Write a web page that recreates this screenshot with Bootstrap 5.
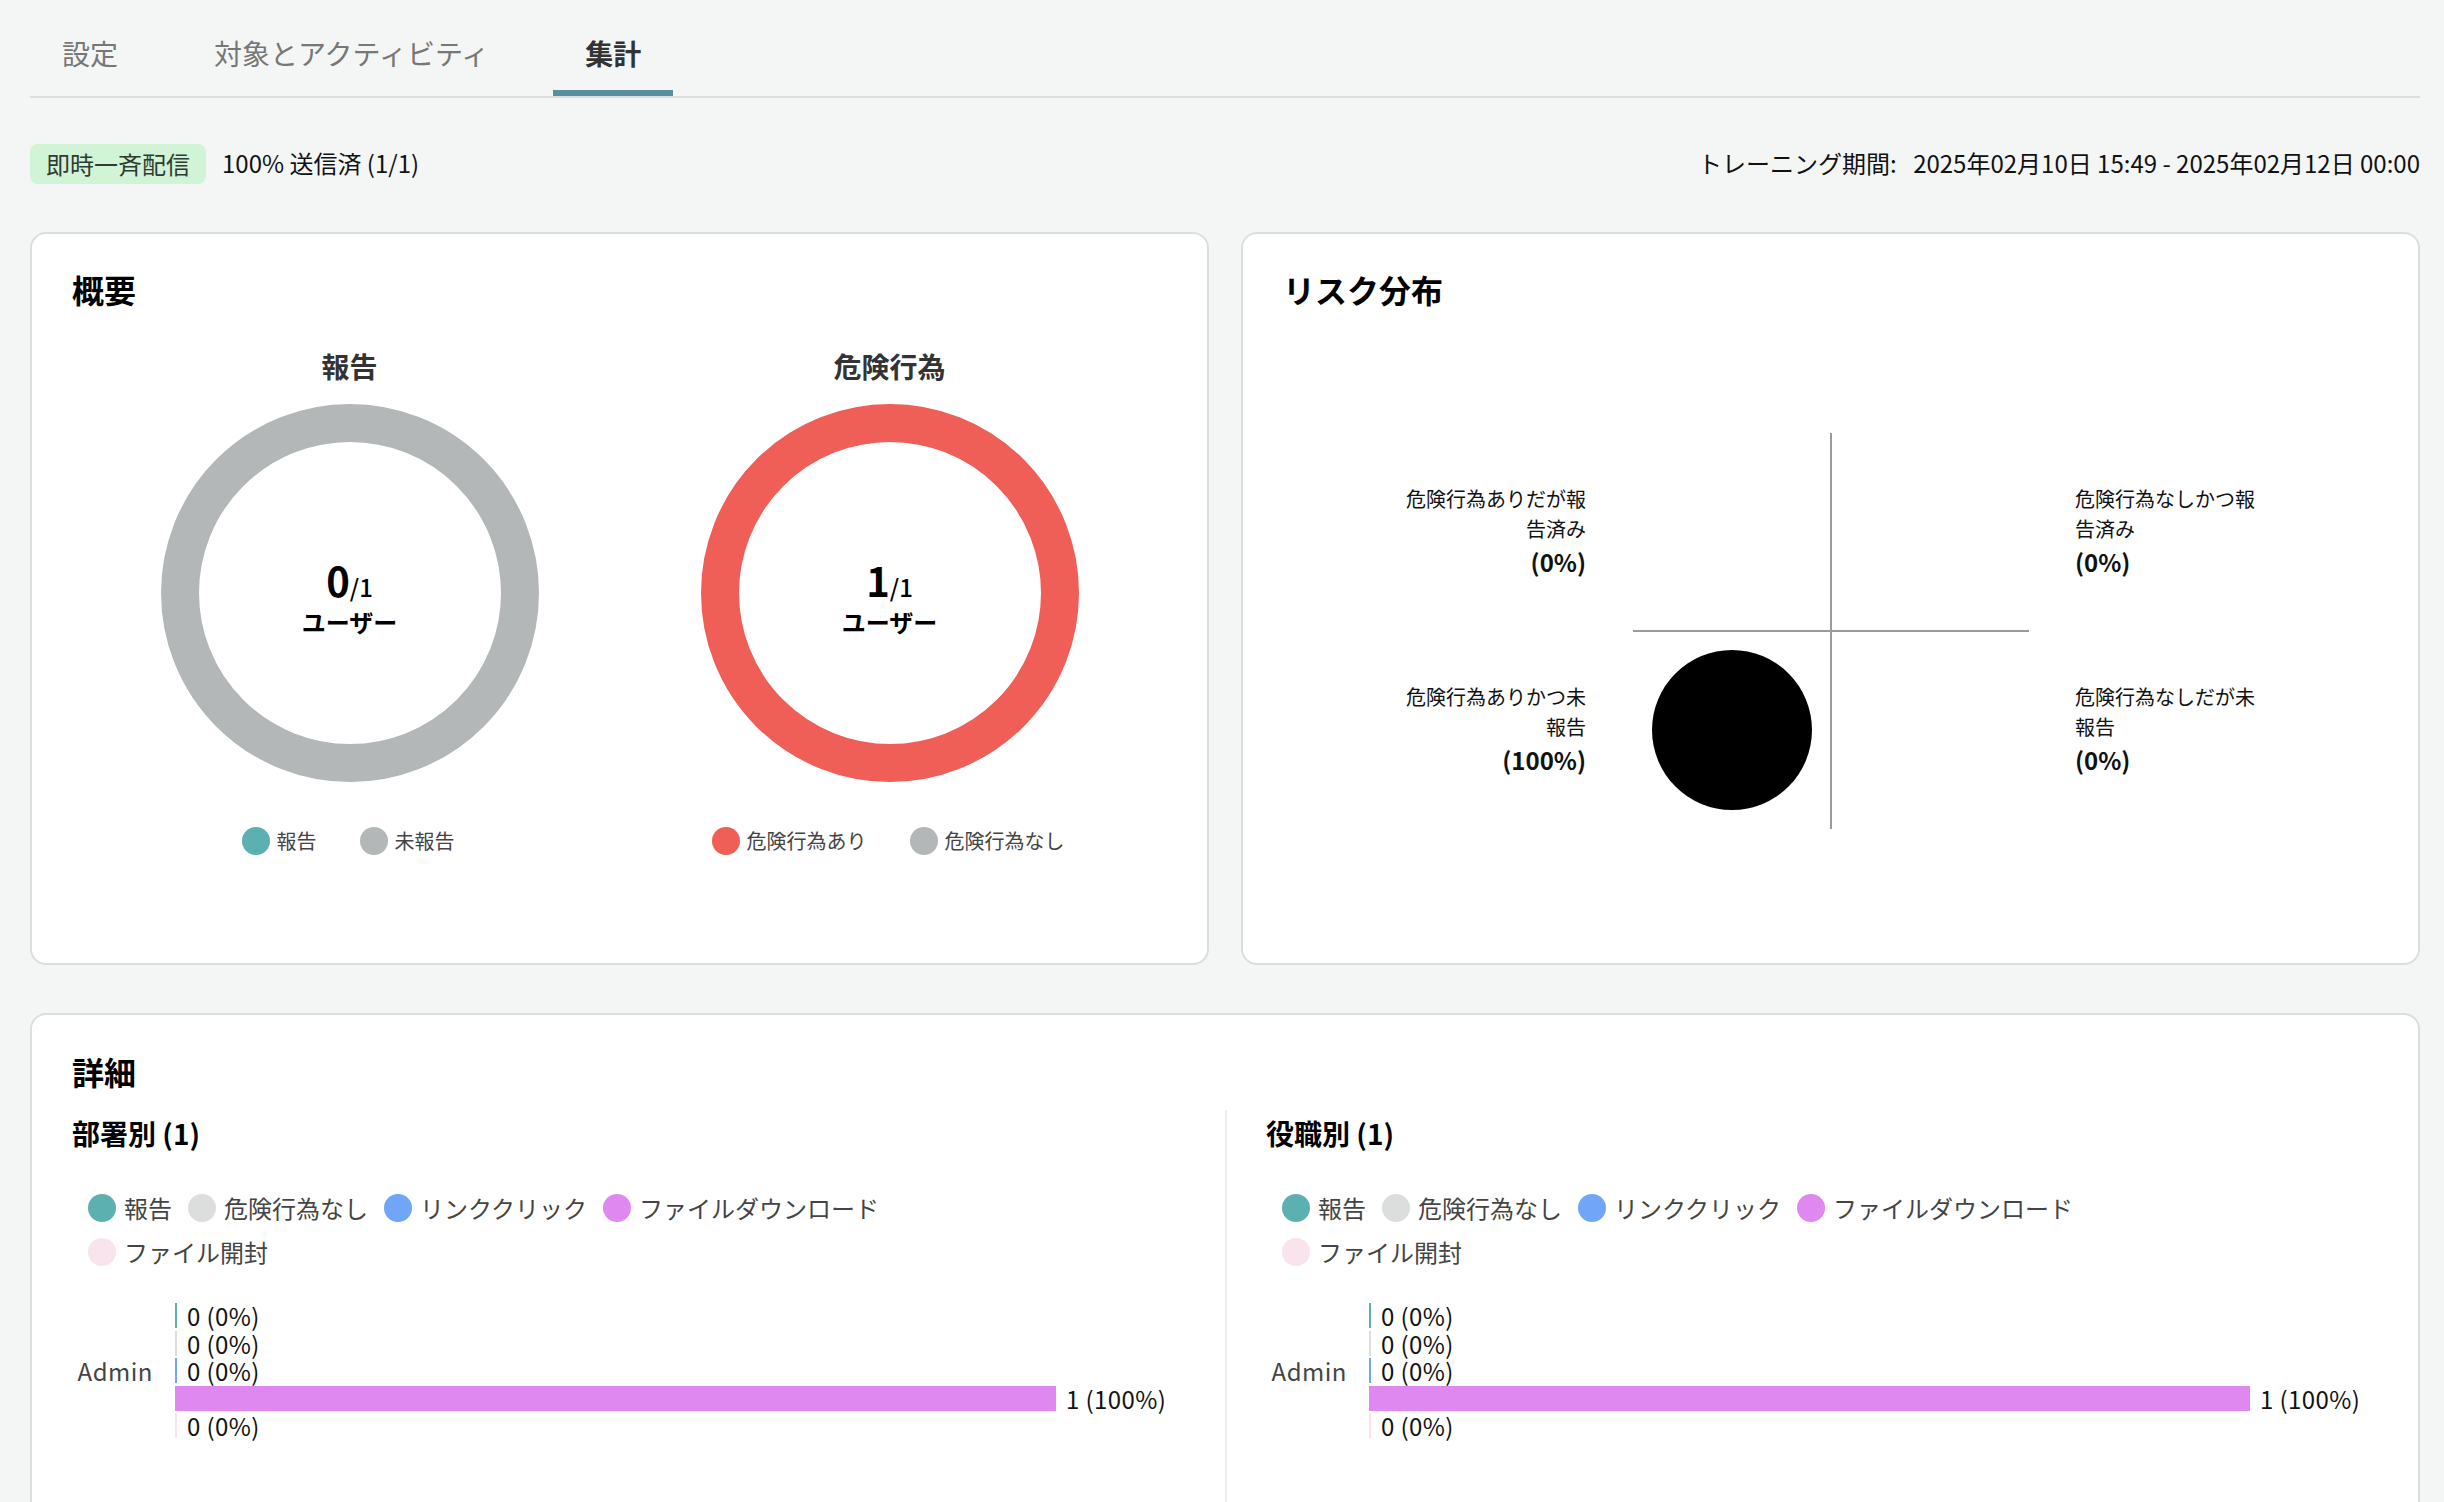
<!DOCTYPE html>
<html lang="ja">
<head>
    <meta charset="UTF-8">
    <meta name="viewport" content="width=device-width, initial-scale=1.0">
    <title>集計</title>
    <link href="https://cdn.jsdelivr.net/npm/bootstrap@5.3.0/dist/css/bootstrap.min.css" rel="stylesheet">
    <style>
        html, body {
            height: 1502px;
            overflow: hidden;
        }
        body {
            background-color: #f4f6f5;
            font-family: "Noto Sans CJK JP", "Noto Sans", sans-serif;
            font-size: 24px;
            line-height: 36px;
            color: #111;
            padding: 0 24px 0 30px;
        }
        .tabs {
            border-bottom: 2px solid #dcdedd;
            gap: 32px;
        }
        .tabs .nav-link {
            padding: 33px 32px 17px;
            font-size: 28px;
            line-height: 40px;
            color: #777;
            border-bottom: 6px solid transparent;
        }
        .tabs .nav-link.active {
            color: #333;
            font-weight: 700;
            border-bottom-color: #5b8fa0;
        }
        .meta-row {
            margin-top: 46px;
            margin-bottom: 48px;
            height: 40px;
        }
        .delivery-badge {
            background-color: #d2f4d6;
            color: #2e3b35;
            border-radius: 8px;
            padding: 2px 16px;
            margin-right: 16px;
        }
        .meta-text {
            padding-bottom: 2px;
        }
        .period-label {
            margin-right: 11px;
        }
        .panel {
            border: 2px solid #dcdedd;
            border-radius: 16px;
            background-color: #fff;
            padding: 31px 40px 0;
        }
        .panel-top {
            width: 1179px;
            height: 733px;
        }
        .panel-title {
            font-size: 32px;
            line-height: 48px;
            font-weight: 700;
            color: #000;
            margin: 0;
        }
        .donut-col {
            width: 540px;
        }
        .donut-title {
            font-size: 28px;
            line-height: 40px;
            font-weight: 700;
            color: #333;
            margin: 33px 0 18px;
        }
        .donut {
            width: 378px;
            height: 378px;
            border: 38px solid #b3b7b7;
            color: #000;
        }
        .donut-red {
            border-color: #ef5e57;
        }
        .donut-num {
            font-size: 40px;
            line-height: 41px;
            font-weight: 700;
            margin-top: 10px;
        }
        .donut-num small {
            font-size: 24px;
            font-weight: 500;
        }
        .donut-unit {
            font-weight: 700;
            line-height: 30px;
        }
        .mini-legend {
            margin-top: 45px;
            padding-right: 3px;
            gap: 43px;
            font-size: 20px;
            line-height: 28px;
            color: #444;
        }
        .dot {
            display: inline-block;
            flex-shrink: 0;
            width: 28px;
            height: 28px;
            border-radius: 50%;
            margin-right: 7px;
        }
        .dot-teal { background-color: #5cb0b0; }
        .dot-gray { background-color: #b3b7b7; }
        .dot-red { background-color: #ef5e57; }
        .dot-light { background-color: #dcdedd; }
        .dot-blue { background-color: #70a5f8; }
        .dot-purple { background-color: #df88f0; }
        .dot-pale { background-color: #f9e4ee; }
        .risk {
            margin-top: 120px;
        }
        .risk-col {
            width: 180px;
        }
        .risk-col div {
            height: 198px;
        }
        .risk-label {
            font-size: 20px;
            line-height: 30px;
        }
        .risk-value {
            font-size: 24px;
            line-height: 36px;
            font-weight: 700;
        }
        .risk-chart {
            position: relative;
            width: 396px;
            height: 396px;
            margin: 0 46px 0 47px;
        }
        .axis-v {
            position: absolute;
            left: 197px;
            top: 0;
            width: 2px;
            height: 396px;
            background-color: #9b9b9b;
        }
        .axis-h {
            position: absolute;
            left: 0;
            top: 197px;
            width: 396px;
            height: 2px;
            background-color: #9b9b9b;
        }
        .risk-point {
            position: absolute;
            left: 19px;
            top: 217px;
            width: 160px;
            height: 160px;
            background-color: #000;
        }
        .panel-detail {
            height: 700px;
            margin-top: 48px;
        }
        .panel-detail .panel-title {
            padding-top: 1px;
        }
        .detail-row {
            margin-top: 15px;
            height: 600px;
        }
        .detail-col {
            width: 1153px;
            padding-top: 3px;
        }
        .detail-col + .detail-col {
            border-left: 2px solid #eceeed;
            padding-left: 39px;
        }
        .detail-title {
            font-size: 28px;
            line-height: 40px;
            font-weight: 700;
            color: #000;
            margin: 0;
        }
        .bar-legend {
            margin: 37px 0 33px;
            padding-left: 16px;
            max-width: 900px;
            gap: 8px 16px;
            color: #444;
        }
        .bar-legend .dot {
            margin-right: 8px;
        }
        .bar-label {
            width: 81px;
            margin-right: 22px;
            color: #444;
            letter-spacing: .5px;
        }
        .bars {
            gap: 2.5px;
        }
        .bar-row {
            height: 25px;
            line-height: 25px;
            letter-spacing: .4px;
        }
        .bar {
            height: 25px;
            min-width: 2px;
            margin-right: 10px;
        }
        .bar-track {
            width: 881px;
        }
    </style>
</head>
<body>
    <ul class="nav tabs">
        <li class="nav-item"><a class="nav-link" href="#">設定</a></li>
        <li class="nav-item"><a class="nav-link" href="#">対象とアクティビティ</a></li>
        <li class="nav-item"><a class="nav-link active" href="#">集計</a></li>
    </ul>

    <div class="meta-row d-flex align-items-center">
        <span class="delivery-badge">即時一斉配信</span>
        <span class="meta-text">100% 送信済 (1/1)</span>
        <span class="meta-text ms-auto"><span class="period-label">トレーニング期間:</span> 2025年02月10日 15:49 - 2025年02月12日 00:00</span>
    </div>

    <div class="d-flex justify-content-between">
        <div class="panel panel-top">
            <h2 class="panel-title">概要</h2>
            <div class="d-flex justify-content-center">
                <div class="donut-col d-flex flex-column align-items-center">
                    <h3 class="donut-title">報告</h3>
                    <div class="donut rounded-circle d-flex flex-column align-items-center justify-content-center">
                        <div class="donut-num">0<small>/1</small></div>
                        <div class="donut-unit">ユーザー</div>
                    </div>
                    <div class="mini-legend d-flex">
                        <span class="d-flex align-items-center"><i class="dot dot-teal"></i>報告</span>
                        <span class="d-flex align-items-center"><i class="dot dot-gray"></i>未報告</span>
                    </div>
                </div>
                <div class="donut-col d-flex flex-column align-items-center">
                    <h3 class="donut-title">危険行為</h3>
                    <div class="donut donut-red rounded-circle d-flex flex-column align-items-center justify-content-center">
                        <div class="donut-num">1<small>/1</small></div>
                        <div class="donut-unit">ユーザー</div>
                    </div>
                    <div class="mini-legend d-flex">
                        <span class="d-flex align-items-center"><i class="dot dot-red"></i>危険行為あり</span>
                        <span class="d-flex align-items-center"><i class="dot dot-gray"></i>危険行為なし</span>
                    </div>
                </div>
            </div>
        </div>

        <div class="panel panel-top">
            <h2 class="panel-title">リスク分布</h2>
            <div class="risk d-flex justify-content-center">
                <div class="risk-col text-end">
                    <div class="d-flex flex-column justify-content-center">
                        <span class="risk-label">危険行為ありだが報告済み</span>
                        <span class="risk-value">(0%)</span>
                    </div>
                    <div class="d-flex flex-column justify-content-center">
                        <span class="risk-label">危険行為ありかつ未報告</span>
                        <span class="risk-value">(100%)</span>
                    </div>
                </div>
                <div class="risk-chart">
                    <span class="axis-v"></span>
                    <span class="axis-h"></span>
                    <span class="risk-point rounded-circle"></span>
                </div>
                <div class="risk-col">
                    <div class="d-flex flex-column justify-content-center">
                        <span class="risk-label">危険行為なしかつ報告済み</span>
                        <span class="risk-value">(0%)</span>
                    </div>
                    <div class="d-flex flex-column justify-content-center">
                        <span class="risk-label">危険行為なしだが未報告</span>
                        <span class="risk-value">(0%)</span>
                    </div>
                </div>
            </div>
        </div>
    </div>

    <div class="panel panel-detail">
        <h2 class="panel-title">詳細</h2>
        <div class="detail-row d-flex">
            <div class="detail-col">
                <h3 class="detail-title">部署別 (1)</h3>
                <div class="bar-legend d-flex flex-wrap">
                    <span class="d-flex align-items-center"><i class="dot dot-teal"></i>報告</span>
                    <span class="d-flex align-items-center"><i class="dot dot-light"></i>危険行為なし</span>
                    <span class="d-flex align-items-center"><i class="dot dot-blue"></i>リンククリック</span>
                    <span class="d-flex align-items-center"><i class="dot dot-purple"></i>ファイルダウンロード</span>
                    <span class="d-flex align-items-center"><i class="dot dot-pale"></i>ファイル開封</span>
                </div>
                <div class="d-flex align-items-center">
                    <span class="bar-label text-end">Admin</span>
                    <div class="bars d-flex flex-column">
                        <div class="bar-row bar-track d-flex"><span class="bar dot-teal" style="width:0%"></span>0 (0%)</div>
                        <div class="bar-row bar-track d-flex"><span class="bar dot-light" style="width:0%"></span>0 (0%)</div>
                        <div class="bar-row bar-track d-flex"><span class="bar dot-blue" style="width:0%"></span>0 (0%)</div>
                        <div class="bar-row d-flex"><span class="bar dot-purple" style="width:881px"></span><span class="text-nowrap">1 (100%)</span></div>
                        <div class="bar-row bar-track d-flex"><span class="bar dot-pale" style="width:0%"></span>0 (0%)</div>
                    </div>
                </div>
            </div>
            <div class="detail-col">
                <h3 class="detail-title">役職別 (1)</h3>
                <div class="bar-legend d-flex flex-wrap">
                    <span class="d-flex align-items-center"><i class="dot dot-teal"></i>報告</span>
                    <span class="d-flex align-items-center"><i class="dot dot-light"></i>危険行為なし</span>
                    <span class="d-flex align-items-center"><i class="dot dot-blue"></i>リンククリック</span>
                    <span class="d-flex align-items-center"><i class="dot dot-purple"></i>ファイルダウンロード</span>
                    <span class="d-flex align-items-center"><i class="dot dot-pale"></i>ファイル開封</span>
                </div>
                <div class="d-flex align-items-center">
                    <span class="bar-label text-end">Admin</span>
                    <div class="bars d-flex flex-column">
                        <div class="bar-row bar-track d-flex"><span class="bar dot-teal" style="width:0%"></span>0 (0%)</div>
                        <div class="bar-row bar-track d-flex"><span class="bar dot-light" style="width:0%"></span>0 (0%)</div>
                        <div class="bar-row bar-track d-flex"><span class="bar dot-blue" style="width:0%"></span>0 (0%)</div>
                        <div class="bar-row d-flex"><span class="bar dot-purple" style="width:881px"></span><span class="text-nowrap">1 (100%)</span></div>
                        <div class="bar-row bar-track d-flex"><span class="bar dot-pale" style="width:0%"></span>0 (0%)</div>
                    </div>
                </div>
            </div>
        </div>
    </div>

    <script src="https://cdn.jsdelivr.net/npm/bootstrap@5.3.0/dist/js/bootstrap.bundle.min.js"></script>
</body>
</html>
